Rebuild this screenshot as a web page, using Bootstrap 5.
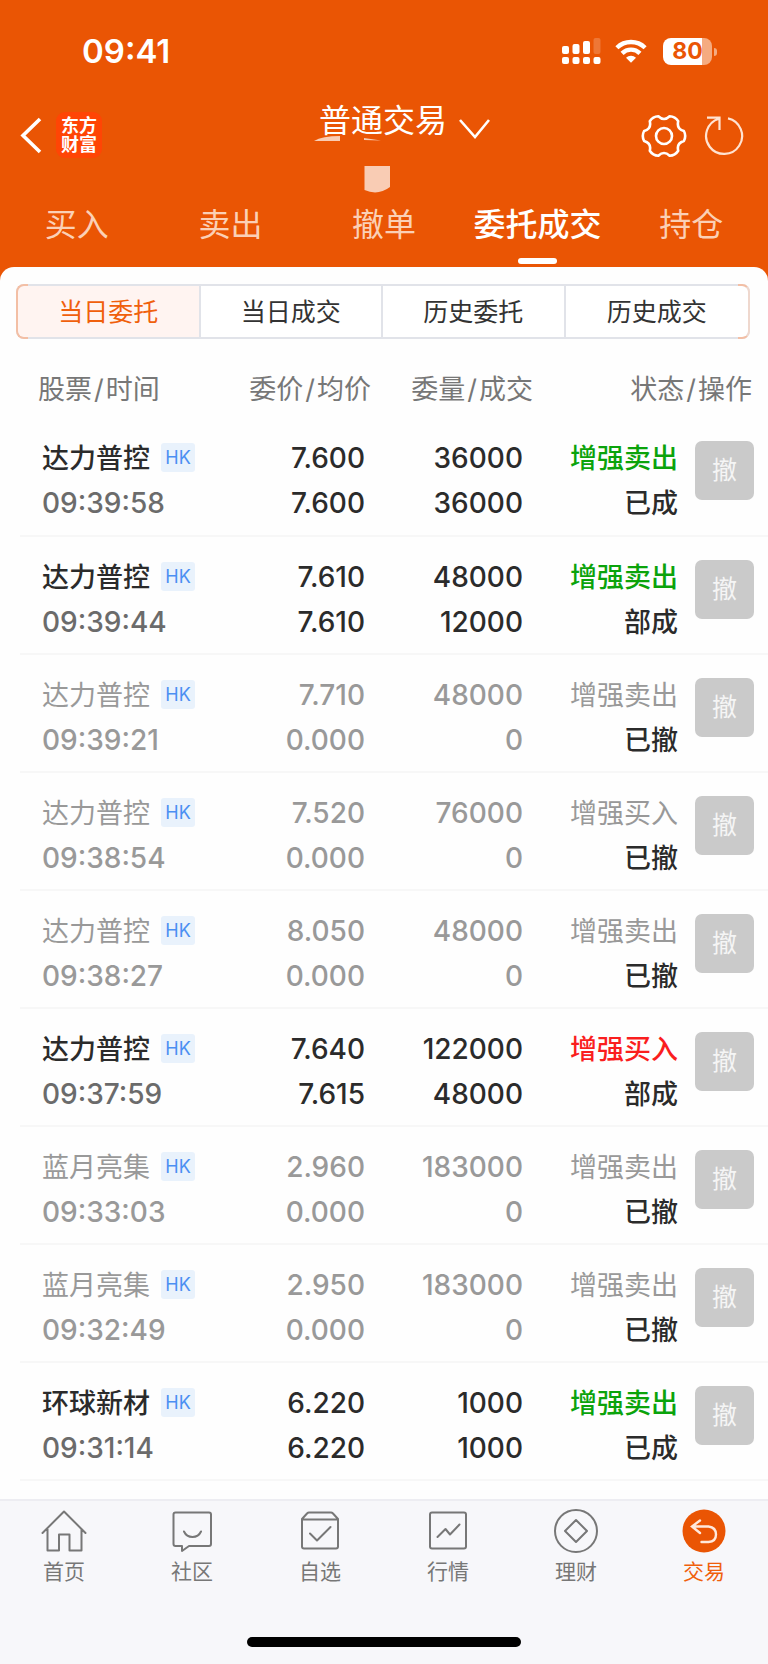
<!DOCTYPE html>
<html lang="zh-CN">
<head>
<meta charset="utf-8">
<meta name="viewport" content="width=device-width, initial-scale=1">
<title>普通交易</title>
<link href="https://cdn.jsdelivr.net/npm/bootstrap@5.3.0/dist/css/bootstrap.min.css" rel="stylesheet">
<style>
  :root { --brand: #ea5504; --ink: #2b2b2b; --dim: #999; --mid: #6b6b6b; }
  body { font-family: Inter, "Noto Sans CJK SC", sans-serif; background: var(--brand); color: var(--ink); }
  button { font-family: inherit; }
  svg { display: block; }

  .status-bar { height: 96px; padding: 6px 56px 0 82px; }
  .clock { font-size: 33px; font-weight: 600; line-height: 40px; }
  .signal { margin-right: 14px; }
  .battery { width: 49px; height: 27px; border-radius: 8px; color: var(--brand); font-size: 23px; font-weight: 700; line-height: 27px;
    background: linear-gradient(to right, #fff 80%, #f5ab80 80%); }
  .battery::after { content: ""; position: absolute; left: 51px; top: 10px; width: 3px; height: 8px; border-radius: 0 3px 3px 0; background: #f5ab80; }

  .title-bar { height: 80px; padding: 0 23px 0 20px; }
  .logo { width: 46px; height: 46px; border-radius: 9px; background: #ff4505; font-size: 18px; font-weight: 700; line-height: 19px; margin-left: 14px; }
  .title-btn { font-size: 32px; line-height: 40px; left: 0; right: 0; top: 5px; width: max-content; margin: 0 auto; padding: 0 0 0 42px; }
  .title-mark { left: 50%; top: 39px; margin-left: -70px; }

  .main-tabs { height: 91px; padding-top: 29px; }
  .main-tabs a { font-size: 32px; line-height: 40px; color: #fbd0b6; text-decoration: none; }
  .main-tabs a.active { color: #fff; font-weight: 500; }
  .main-tabs a.active::after { content: ""; display: block; width: 39px; height: 6px; margin: 13px auto 0; border-radius: 3px; background: #fff; }

  .sheet { background: #fefefe; border-radius: 14px 14px 0 0; padding-top: 17px; }
  .segments { margin: 0 18px 0 16px; height: 55px; border: 2px solid #e1e3e9; border-radius: 8px; }
  .segments::before, .segments::after { content: ""; position: absolute; top: -2px; bottom: -2px; width: 12px; border: 2px solid #f3bfa5; pointer-events: none; }
  .segments::before { left: -2px; border-right: 0; border-radius: 8px 0 0 8px; }
  .segments::after { right: -2px; border-left: 0; border-right-color: #efd8ce; border-radius: 0 8px 8px 0; }
  .segments button { font-size: 25px; line-height: 32px; color: #333; background: #fff; border: 0; border-right: 2px solid #e1e3e9; }
  .segments button:first-child { border-radius: 6px 0 0 6px; }
  .segments button:last-child { border-right: 0; border-radius: 0 6px 6px 0; }
  .segments button.active { color: #f0600c; background: #fff4f1; }

  .orders { width: calc(100% - 20px); margin-left: 20px; table-layout: fixed; border-collapse: collapse; }
  .orders th { height: 79px; padding: 31px 0 0; font-size: 27px; font-weight: 400; line-height: 40px; color: #777; vertical-align: top; white-space: nowrap; }
  .orders th.first { padding-left: 18px; }
  .orders th i { font-style: normal; margin: 0 2px; }
  .orders td { height: 118px; padding: 18px 10px 0 0; border-bottom: 2px solid #f7f7f7; font-size: 27px; font-weight: 500; line-height: 45px; vertical-align: top; white-space: nowrap; }
  .orders td:first-child { padding-left: 22px; padding-right: 0; }
  .orders td:last-child { padding: 23px 14px 0 0; }
  .orders time, .orders td.num { font-size: 28px; }
  .orders time { color: var(--mid); display: block; }
  .orders .void td, .orders .void time { color: var(--dim); }
  .orders .void td:first-child, .orders .void td.state { font-weight: 400; }
  .orders .void time { font-weight: 500; }
  .orders td.state span + span { color: var(--ink); font-weight: 500; }
  .orders td > span { display: block; }
  .col-price { width: 169px; } .col-qty { width: 158px; } .col-state { width: 155px; } .col-act { width: 80px; }
  .sell { color: #0ba30b; } .buy { color: #fa1e1e; }
  .market { width: 34px; height: 29px; border-radius: 3px; background: #e9f2fc; color: #4b8ff2; font-size: 18px; font-weight: 400; line-height: 29px; margin: 0 0 2px 11px; }
  .cancel { width: 59px; height: 59px; border: 0; border-radius: 7px; background: #cacaca; color: #f5f5f5; font-size: 25px; line-height: 59px; padding: 0; }

  .dock { background: #f7f7fa; border-top: 2px solid #ededf2; padding-top: 5px; }
  .dock a { color: #777; text-decoration: none; font-size: 21px; line-height: 28px; }
  .dock a.active { color: #f0600c; }
  .dock svg { margin: 0 auto 4px; }
  .line { fill: none; stroke: currentColor; stroke-width: 2; stroke-linecap: round; stroke-linejoin: round; }
  .home-bar { width: 274px; height: 10px; border-radius: 5px; background: #000; margin: 51px auto 17px; }
</style>
</head>
<body class="d-flex flex-column min-vh-100">

<header class="text-white">
  <div class="status-bar d-flex align-items-center justify-content-between">
    <span class="clock">09:41</span>
    <div class="d-flex align-items-center">
      <svg class="signal" width="39" height="28" viewBox="0 0 39 28" fill="#fff" aria-hidden="true">
        <rect x="0" y="20" width="7" height="7" rx="2"/><rect x="10.5" y="20" width="7" height="7" rx="2"/><rect x="21" y="20" width="7" height="7" rx="2"/><rect x="31.500" y="20" width="7" height="7" rx="2"/>
        <rect x="0" y="9" width="7" height="8" rx="2"/><rect x="10.500" y="7" width="7" height="10" rx="2"/><rect x="21" y="4" width="7" height="13" rx="2"/><rect x="31.500" y="1" width="7" height="16" rx="2" opacity=".2"/>
      </svg>
      <svg class="me-3" width="32" height="26" viewBox="0 0 34 26" fill="none" stroke="#fff" stroke-width="4.600" aria-hidden="true">
        <path d="M2 9.500a21.500 21.500 0 0 1 30 0"/><path d="M7.500 15.500a13.500 13.500 0 0 1 19 0"/><path d="M11.700 20.200a7.600 7.600 0 0 1 10.600 0L17 25.500z" fill="#fff" stroke="none"/>
      </svg>
      <span class="battery position-relative text-center">80</span>
    </div>
  </div>

  <div class="title-bar position-relative d-flex align-items-start justify-content-between">
    <div class="d-flex align-items-center pt-3">
      <button class="btn p-0 border-0 text-white" type="button" aria-label="返回">
        <svg width="22" height="40" viewBox="0 0 22 40" fill="none" stroke="currentColor" stroke-width="3.600"><path d="M20 4 3 20.500 20 37"/></svg>
      </button>
      <span class="logo d-flex flex-column justify-content-center text-center">东方<br>财富</span>
    </div>
    <button class="title-btn btn position-absolute border-0 text-white d-flex align-items-center" type="button">普通交易
      <svg class="ms-2 mt-3" width="36" height="22" viewBox="0 0 36 22" fill="none" stroke="currentColor" stroke-width="2.600"><path d="M5 2 20 19 34 2"/></svg>
    </button>
    <svg class="title-mark position-absolute" width="86" height="60" viewBox="0 0 86 60" fill="#f9ccb4" aria-hidden="true">
      <path d="M0 6Q8 1 26 1V6z"/><path d="M50 3 67 5.500 50 5z"/><path d="M50.500 31H76V52Q64 61 50.500 55z"/>
    </svg>
    <div class="d-flex pt-3">
      <button class="btn p-0 border-0 text-white" type="button" aria-label="设置">
        <svg width="46" height="48" viewBox="-23 -24 46 48" fill="none" stroke="currentColor" stroke-width="2.600" stroke-linejoin="round">
          <path d="M19.900 5Q12.400 7.150 14.200 14.700 11.250 19.500 5.650 19.700 0 14.300-5.650 19.700-11.250 19.500-14.200 14.700-12.400 7.150-19.900 5-22.500 0-19.900-5-12.400-7.150-14.200-14.700-11.250-19.500-5.650-19.700 0-14.300 5.650-19.700 11.250-19.500 14.200-14.700 12.400-7.150 19.900-5 22.500 0 19.900 5z"/><circle r="8"/>
        </svg>
      </button>
      <button class="btn p-0 border-0 text-white ms-3" type="button" aria-label="刷新">
        <svg width="42" height="48" viewBox="-21 -24 42 48" fill="none" stroke="#ffe3d2" stroke-width="2.200"><path d="M4-17.600A18 18 0 1 1-5-17.300M-17-18.300H-4.500V-6"/></svg>
      </button>
    </div>
  </div>

  <nav class="main-tabs row row-cols-5 g-0 text-center" aria-label="交易">
    <a class="col" href="#buy">买入</a>
    <a class="col" href="#sell">卖出</a>
    <a class="col" href="#cancel">撤单</a>
    <a class="col active" href="#orders" aria-current="page">委托成交</a>
    <a class="col" href="#holdings">持仓</a>
  </nav>
</header>

<main class="sheet flex-grow-1">
  <div class="segments d-flex position-relative">
    <button class="active flex-fill w-25 p-0" type="button">当日委托</button>
    <button class="flex-fill w-25 p-0" type="button">当日成交</button>
    <button class="flex-fill w-25 p-0" type="button">历史委托</button>
    <button class="flex-fill w-25 p-0" type="button">历史成交</button>
  </div>

  <table class="orders">
    <colgroup><col><col class="col-price"><col class="col-qty"><col class="col-state"><col class="col-act"></colgroup>
    <thead>
      <tr><th class="first">股票<i>/</i>时间</th><th class="text-end pe-1">委价<i>/</i>均价</th><th class="text-end">委量<i>/</i>成交</th><th class="text-end pe-3" colspan="2">状态<i>/</i>操作</th></tr>
    </thead>
    <tbody>
      <tr>
        <td><div class="d-flex align-items-center">达力普控<span class="market text-center">HK</span></div><time>09:39:58</time></td>
        <td class="num text-end"><span>7.600</span><span>7.600</span></td><td class="num text-end"><span>36000</span><span>36000</span></td>
        <td class="state text-end"><span class="sell">增强卖出</span><span>已成</span></td><td class="text-end"><button class="cancel" type="button">撤</button></td>
      </tr>
      <tr>
        <td><div class="d-flex align-items-center">达力普控<span class="market text-center">HK</span></div><time>09:39:44</time></td>
        <td class="num text-end"><span>7.610</span><span>7.610</span></td><td class="num text-end"><span>48000</span><span>12000</span></td>
        <td class="state text-end"><span class="sell">增强卖出</span><span>部成</span></td><td class="text-end"><button class="cancel" type="button">撤</button></td>
      </tr>
      <tr class="void">
        <td><div class="d-flex align-items-center">达力普控<span class="market text-center">HK</span></div><time>09:39:21</time></td>
        <td class="num text-end"><span>7.710</span><span>0.000</span></td><td class="num text-end"><span>48000</span><span>0</span></td>
        <td class="state text-end"><span>增强卖出</span><span>已撤</span></td><td class="text-end"><button class="cancel" type="button">撤</button></td>
      </tr>
      <tr class="void">
        <td><div class="d-flex align-items-center">达力普控<span class="market text-center">HK</span></div><time>09:38:54</time></td>
        <td class="num text-end"><span>7.520</span><span>0.000</span></td><td class="num text-end"><span>76000</span><span>0</span></td>
        <td class="state text-end"><span>增强买入</span><span>已撤</span></td><td class="text-end"><button class="cancel" type="button">撤</button></td>
      </tr>
      <tr class="void">
        <td><div class="d-flex align-items-center">达力普控<span class="market text-center">HK</span></div><time>09:38:27</time></td>
        <td class="num text-end"><span>8.050</span><span>0.000</span></td><td class="num text-end"><span>48000</span><span>0</span></td>
        <td class="state text-end"><span>增强卖出</span><span>已撤</span></td><td class="text-end"><button class="cancel" type="button">撤</button></td>
      </tr>
      <tr>
        <td><div class="d-flex align-items-center">达力普控<span class="market text-center">HK</span></div><time>09:37:59</time></td>
        <td class="num text-end"><span>7.640</span><span>7.615</span></td><td class="num text-end"><span>122000</span><span>48000</span></td>
        <td class="state text-end"><span class="buy">增强买入</span><span>部成</span></td><td class="text-end"><button class="cancel" type="button">撤</button></td>
      </tr>
      <tr class="void">
        <td><div class="d-flex align-items-center">蓝月亮集<span class="market text-center">HK</span></div><time>09:33:03</time></td>
        <td class="num text-end"><span>2.960</span><span>0.000</span></td><td class="num text-end"><span>183000</span><span>0</span></td>
        <td class="state text-end"><span>增强卖出</span><span>已撤</span></td><td class="text-end"><button class="cancel" type="button">撤</button></td>
      </tr>
      <tr class="void">
        <td><div class="d-flex align-items-center">蓝月亮集<span class="market text-center">HK</span></div><time>09:32:49</time></td>
        <td class="num text-end"><span>2.950</span><span>0.000</span></td><td class="num text-end"><span>183000</span><span>0</span></td>
        <td class="state text-end"><span>增强卖出</span><span>已撤</span></td><td class="text-end"><button class="cancel" type="button">撤</button></td>
      </tr>
      <tr>
        <td><div class="d-flex align-items-center">环球新材<span class="market text-center">HK</span></div><time>09:31:14</time></td>
        <td class="num text-end"><span>6.220</span><span>6.220</span></td><td class="num text-end"><span>1000</span><span>1000</span></td>
        <td class="state text-end"><span class="sell">增强卖出</span><span>已成</span></td><td class="text-end"><button class="cancel" type="button">撤</button></td>
      </tr>
    </tbody>
  </table>
</main>

<footer class="dock">
  <nav class="row row-cols-6 g-0 text-center" aria-label="主导航">
    <a class="col" href="#home"><svg class="line" width="48" height="48" viewBox="0 0 48 48"><path d="M2.500 27 24 5.500 45.500 27M7.500 23V44.500H19V28.500H29.500V44.500H41.500V23"/></svg>首页</a>
    <a class="col" href="#community"><svg class="line" width="48" height="48" viewBox="0 0 48 48"><path d="M7.500 6.500H41Q43 6.500 43 8.500V38Q43 40 41 40H21L14 45V40H7.500Q5.500 40 5.500 38V8.500Q5.500 6.500 7.500 6.500zM16 25.500Q18.500 31 24.500 31T33 25.500"/></svg>社区</a>
    <a class="col" href="#watch"><svg class="line" width="48" height="48" viewBox="0 0 48 48"><path d="M6 13 11 7.500Q12 6.500 13 6.500H35Q36 6.500 37 7.500L42 13V40.500Q42 42.500 40 42.500H8Q6 42.500 6 40.500zM6 13.500H42M14 27.500 21 34.500 34.500 21"/></svg>自选</a>
    <a class="col" href="#quotes"><svg class="line" width="48" height="48" viewBox="0 0 48 48"><rect x="6" y="6.500" width="36" height="36" rx="2"/><path d="M13.500 31 21.500 23 26 28.500 35.500 18.500"/></svg>行情</a>
    <a class="col" href="#wealth"><svg class="line" width="48" height="48" viewBox="0 0 48 48"><circle cx="24" cy="25" r="21"/><path d="M24 14 35 25 24 36 13 25z"/></svg>理财</a>
    <a class="col active" href="#trade"><svg width="48" height="48" viewBox="0 0 48 48"><circle cx="24" cy="25" r="21.500" fill="#ea5504"/><path d="M20 14.500 12 20.500 20 27M12 20.500H28.500Q36 21.500 36 28.500T28.500 36H21.500" fill="none" stroke="#ffe9dc" stroke-width="2.400" stroke-linecap="round"/></svg>交易</a>
  </nav>
  <div class="home-bar"></div>
</footer>

<script src="https://cdn.jsdelivr.net/npm/bootstrap@5.3.0/dist/js/bootstrap.bundle.min.js"></script>
</body>
</html>
